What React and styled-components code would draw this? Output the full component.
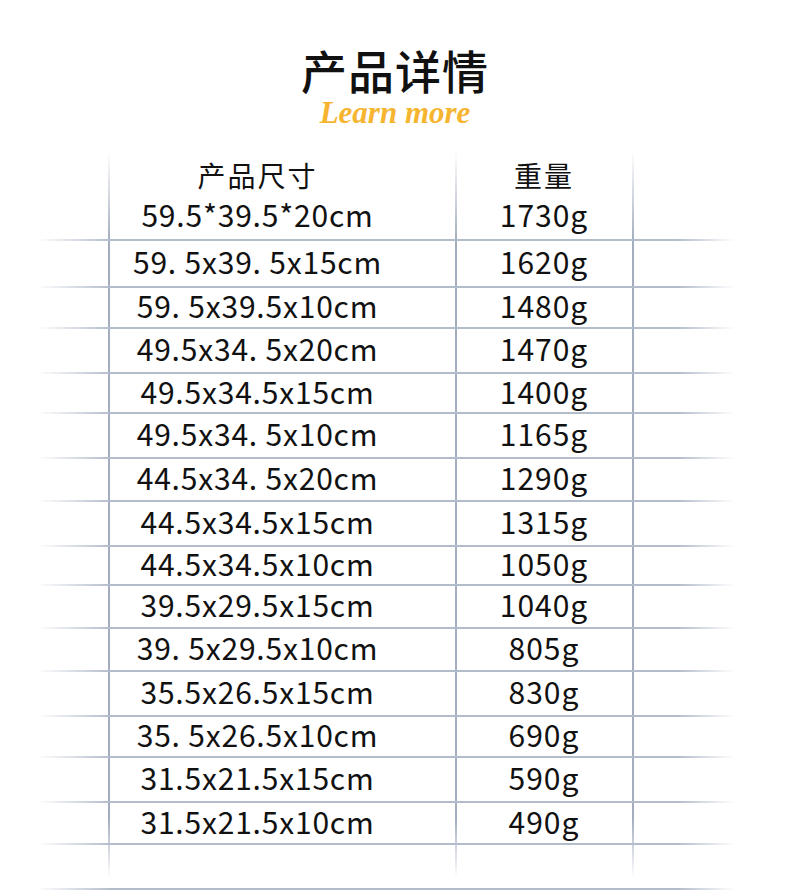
import styled, { createGlobalStyle } from "styled-components";

const GlobalStyle = createGlobalStyle`
  * { box-sizing: border-box; }
  body {
    margin: 0;
    background: #fff;
    font-family: "Noto Sans CJK SC", "Noto Sans", sans-serif;
    color: #111;
  }
`;

const Page = styled.div`
  width: 790px;
  height: 894px;
  overflow: hidden;
  background: #fff;
  display: flex;
  flex-direction: column;
`;

const Heading = styled.header`
  display: flex;
  flex-direction: column;
  align-items: center;
  padding-top: 46px;
`;

const Title = styled.h1`
  margin: 0;
  font-size: 46px;
  line-height: 46px;
  font-weight: 500;
  letter-spacing: 1px;
  color: #111;
`;

const Subtitle = styled.div`
  margin-top: 6px;
  font-family: "Liberation Serif", "DejaVu Serif", serif;
  font-style: italic;
  font-weight: 700;
  font-size: 31px;
  line-height: 30px;
  color: #f6b530;
`;

const lineV = "#a3adbf";
const lineH = "#b3bccb";

const vLine = (x) =>
  `linear-gradient(to bottom, rgba(163,173,191,0) 0, ${lineV} 90px, ${lineV} calc(100% - 60px), rgba(163,173,191,0) 100%) ${x}px 0 / 2px 100% no-repeat`;

const hLine = `linear-gradient(to right, rgba(179,188,203,0) 0, ${lineH} 75px, ${lineH} 640px, rgba(179,188,203,0) 698px)`;

const Table = styled.div`
  width: 698px;
  height: 727px;
  margin-top: 23px;
  margin-left: 37px;
  background: ${vLine(71)}, ${vLine(418)}, ${vLine(595)};
`;

const Row = styled.div`
  display: grid;
  grid-template-columns: 72px 347px 176px 103px;
  align-items: center;
  height: ${({ $h }) => $h}px;
  padding-top: ${({ $pt }) => $pt || 0}px;
  padding-bottom: 7px;
  background: ${({ $line }) =>
    $line ? `${hLine} left bottom / 100% 2px no-repeat` : "none"};
`;

const SizeCell = styled.div`
  grid-column: 2;
  padding-right: 50px;
  text-align: center;
  font-size: ${({ $head }) => ($head ? 28 : 30)}px;
  line-height: 30px;
  white-space: pre;
  letter-spacing: ${({ $head }) => ($head ? 2 : 0.8)}px;
`;

const WeightCell = styled.div`
  grid-column: 3;
  text-align: center;
  font-size: ${({ $head }) => ($head ? 28 : 30)}px;
  line-height: 30px;
  letter-spacing: ${({ $head }) => ($head ? 2 : 1)}px;
`;

const Divider = styled.div`
  width: 698px;
  height: 2px;
  margin-top: 10px;
  margin-left: 37px;
  background: ${hLine};
`;

const rows = [
  ["59.5*39.5*20cm", "1730g", 47],
  ["59. 5x39. 5x15cm", "1620g", 47],
  ["59. 5x39.5x10cm", "1480g", 41],
  ["49.5x34. 5x20cm", "1470g", 45],
  ["49.5x34.5x15cm", "1400g", 40],
  ["49.5x34. 5x10cm", "1165g", 45],
  ["44.5x34. 5x20cm", "1290g", 43],
  ["44.5x34.5x15cm", "1315g", 45],
  ["44.5x34.5x10cm", "1050g", 39],
  ["39.5x29.5x15cm", "1040g", 43],
  ["39. 5x29.5x10cm", "805g", 43],
  ["35.5x26.5x15cm", "830g", 45],
  ["35. 5x26.5x10cm", "690g", 41],
  ["31.5x21.5x15cm", "590g", 45],
  ["31.5x21.5x10cm", "490g", 42],
];

export default function App() {
  return (
    <Page>
      <GlobalStyle />
      <Heading>
        <Title>产品详情</Title>
        <Subtitle>Learn more</Subtitle>
      </Heading>

      <Table>
        <Row $h={43} $pt={9}>
          <SizeCell $head>产品尺寸</SizeCell>
          <WeightCell $head>重量</WeightCell>
        </Row>
        {rows.map(([size, weight, h]) => (
          <Row key={size} $h={h} $line>
            <SizeCell>{size}</SizeCell>
            <WeightCell>{weight}</WeightCell>
          </Row>
        ))}
      </Table>
      <Divider />
    </Page>
  );
}
